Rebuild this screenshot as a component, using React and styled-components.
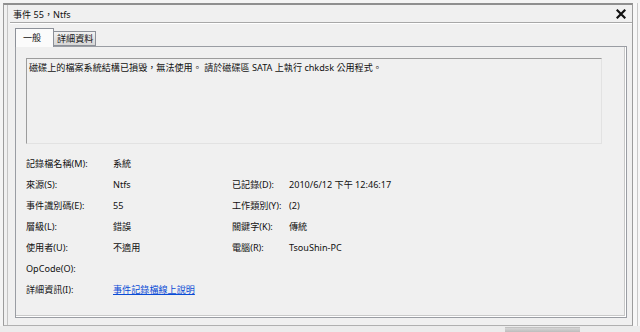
import React from "react";
import styled, { createGlobalStyle } from "styled-components";

const Global = createGlobalStyle`
  html, body { margin: 0; padding: 0; background: #f0f0f0; }
  body { font-family: "Noto Sans", "Noto Sans CJK TC", sans-serif; }
`;

const Page = styled.div`
  width: 640px;
  height: 332px;
  overflow: hidden;
  display: flex;
  flex-direction: column;
  background: #f0f0f0;
  font-family: "Noto Sans", "Noto Sans CJK TC", sans-serif;
  font-size: 9.1px;
  color: #111;
`;

const TopStrip = styled.div`
  height: 3px;
  flex: none;
  background: #f4f4f4;
`;

const Main = styled.div`
  flex: none;
  height: 323px;
  display: flex;
`;

const LeftGutter = styled.div`
  width: 3px;
  flex: none;
  background: #f4f4f4;
`;

const Window = styled.div`
  width: 628px;
  flex: none;
  border: 1px solid #9c9c9c;
  border-top: 2px solid #8f8f8f;
  border-bottom: 1px solid #b0b0b0;
  display: flex;
  box-sizing: content-box;
  height: 320px;
`;

const WindowInner = styled.div`
  flex: 1;
  margin-left: 3px;
  border-left: 1px solid #c4c4c4;
  display: flex;
  flex-direction: column;
`;

const RightGutter = styled.div`
  flex: 1;
  background: #f7f7f7;
  display: flex;
  justify-content: flex-end;
  padding-right: 2px;
`;

const RightLine = styled.div`
  width: 1px;
  background: #c8c8c8;
`;

const TitleRow = styled.div`
  height: 17px;
  display: flex;
  align-items: center;
  justify-content: space-between;
  padding-left: 5px;
  padding-right: 6px;
`;

const TitleText = styled.span`
  line-height: 17px;
  padding-top: 1px;
  white-space: nowrap;
`;

const Separator = styled.div`
  height: 1px;
  margin-left: 2px;
  background: #a8a8a8;
  box-shadow: 0 1px 0 #ffffff;
`;

const TabRow = styled.div`
  height: 18px;
  margin-top: 5px;
  padding-left: 7px;
  display: flex;
  align-items: flex-end;
`;

const Tab = styled.div`
  box-sizing: border-box;
  height: ${(p) => (p.$active ? "19px" : "15px")};
  width: ${(p) => p.$w}px;
  border: 1px solid #8d9199;
  border-bottom: ${(p) => (p.$active ? "none" : "1px solid #8d9199")};
  border-left: ${(p) => (p.$active ? "1px solid #8d9199" : "none")};
  background: ${(p) =>
    p.$active ? "#fbfbfb" : "linear-gradient(#f3f3f3, #e2e2e2 50%, #d8d8d8)"};
  padding-left: ${(p) => p.$pl}px;
  display: flex;
  align-items: center;
  white-space: nowrap;
  line-height: 12px;
  margin-bottom: ${(p) => (p.$active ? "-1px" : "0")};
  position: relative;
  z-index: ${(p) => (p.$active ? 1 : 0)};
`;

const Panel = styled.div`
  box-sizing: border-box;
  height: 272px;
  margin-left: 7px;
  margin-right: 5px;
  border: 1px solid #9a9da3;
  box-shadow: inset -1px -1px 0 #ffffff, inset -2px -2px 0 #c9c9c9;
  background: #f0f0f0;
  padding: 11px 24px 0 10px;
  display: flex;
  flex-direction: column;
`;

const MessageBox = styled.div`
  box-sizing: border-box;
  height: 86px;
  border-top: 1px solid #9c9c9c;
  border-left: 1px solid #9c9c9c;
  border-right: 1px solid #e2e2e2;
  border-bottom: 1px solid #e2e2e2;
  background: #f0f0f0;
  padding: 3px 2px;
  line-height: 12px;
`;

const Fields = styled.div`
  margin-top: 9px;
  display: grid;
  grid-template-columns: 87px 119px 57px 1fr;
  grid-auto-rows: 21px;
  align-items: center;
`;

const Cell = styled.span`
  white-space: nowrap;
  line-height: 12px;
`;

const Link = styled.a`
  color: #0a4cd6;
  text-decoration: underline;
  white-space: nowrap;
  line-height: 12px;
  cursor: pointer;
`;

const BottomStrip = styled.div`
  flex: 1;
  background: #ececec;
  display: flex;
  align-items: flex-end;
  padding-left: 505px;
`;

const Thumb = styled.div`
  width: 75px;
  height: 4px;
  background: linear-gradient(#d6d6d6, #bdbdbd);
  border-top: 1px solid #c2c2c2;
`;

function CloseIcon() {
  return (
    <svg width="10" height="10" viewBox="0 0 10 10">
      <path d="M1.5 1.5 L8.5 8.5 M8.5 1.5 L1.5 8.5" stroke="#111" strokeWidth="2.2" strokeLinecap="square" />
    </svg>
  );
}

const rows = [
  ["記錄檔名稱(M):", "系統", "", ""],
  ["來源(S):", "Ntfs", "已記錄(D):", "2010/6/12 下午 12:46:17"],
  ["事件識別碼(E):", "55", "工作類別(Y):", "(2)"],
  ["層級(L):", "錯誤", "關鍵字(K):", "傳統"],
  ["使用者(U):", "不適用", "電腦(R):", "TsouShin-PC"],
  ["OpCode(O):", "", "", ""],
];

export default function App() {
  return (
    <>
      <Global />
      <Page>
        <TopStrip />
        <Main>
          <LeftGutter />
          <Window>
            <WindowInner>
              <TitleRow>
                <TitleText>事件 55，Ntfs</TitleText>
                <CloseIcon />
              </TitleRow>
              <Separator />
              <TabRow>
                <Tab $active $w={39} $pl={7}>一般</Tab>
                <Tab $w={42} $pl={3}>詳細資料</Tab>
              </TabRow>
              <Panel>
                <MessageBox>
                  磁碟上的檔案系統結構已損毀，無法使用。 請於磁碟區 SATA 上執行 chkdsk 公用程式。
                </MessageBox>
                <Fields>
                  {rows.map((r, i) => (
                    <React.Fragment key={i}>
                      <Cell>{r[0]}</Cell>
                      <Cell>{r[1]}</Cell>
                      <Cell>{r[2]}</Cell>
                      <Cell>{r[3]}</Cell>
                    </React.Fragment>
                  ))}
                  <Cell>詳細資訊(I):</Cell>
                  <span>
                    <Link>事件記錄檔線上說明</Link>
                  </span>
                  <Cell />
                  <Cell />
                </Fields>
              </Panel>
            </WindowInner>
          </Window>
          <RightGutter>
            <RightLine />
          </RightGutter>
        </Main>
        <BottomStrip>
          <Thumb />
        </BottomStrip>
      </Page>
    </>
  );
}
